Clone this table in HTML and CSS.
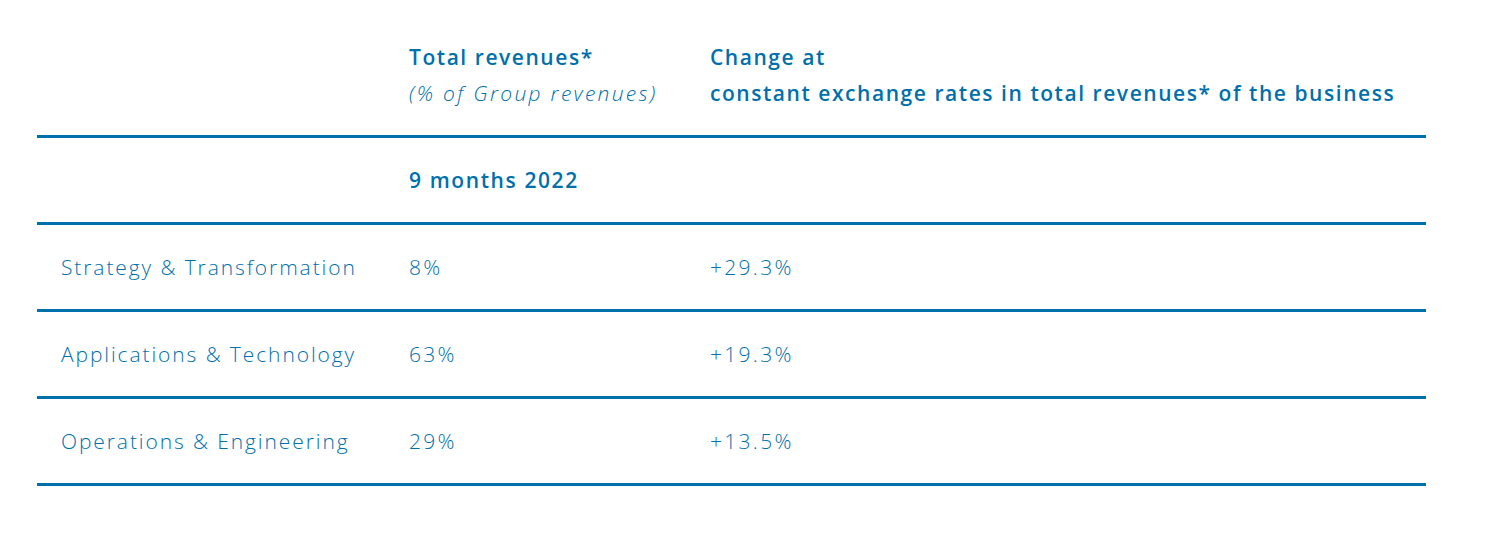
FILE: index.html
```html
<!DOCTYPE html>
<html lang="en">
<head>
<meta charset="utf-8">
<title>Revenues by business</title>
<link rel="stylesheet" href="styles.css">
</head>
<body>
<table class="rev">
  <colgroup>
    <col class="c1"><col class="c2"><col class="c3">
  </colgroup>
  <thead>
    <tr class="head">
      <th></th>
      <th><span class="b">Total revenues*</span><br><em>(% of Group revenues)</em></th>
      <th><span class="b">Change at<br>constant exchange rates in total revenues* of the business</span></th>
    </tr>
  </thead>
  <tbody>
    <tr class="period">
      <td></td>
      <td class="b">9 months 2022</td>
      <td></td>
    </tr>
    <tr>
      <td class="name">Strategy &amp; Transformation</td>
      <td class="num">8%</td>
      <td class="num">+29.3%</td>
    </tr>
    <tr>
      <td class="name">Applications &amp; Technology</td>
      <td class="num">63%</td>
      <td class="num">+19.3%</td>
    </tr>
    <tr>
      <td class="name">Operations &amp; Engineering</td>
      <td class="num">29%</td>
      <td class="num">+13.5%</td>
    </tr>
  </tbody>
</table>
</body>
</html>
```
FILE: styles.css
```css
html, body {
  margin: 0;
  padding: 0;
  background: #ffffff;
}
body {
  font-family: "Open Sans", "Noto Sans", sans-serif;
  color: #0070ad;
}
.rev {
  margin-left: 37px;
  width: 1389px;
  border-collapse: separate;
  border-spacing: 0;
  table-layout: fixed;
  font-size: 21px;
}
.c1 { width: 372px; }
.c2 { width: 301px; }
.rev th, .rev td {
  padding: 0;
  text-align: left;
  border-bottom: 3px solid #0070ad;
  vertical-align: middle;
  font-weight: 300;
  letter-spacing: 1.9px;
  white-space: nowrap;
}
.head th {
  padding-top: 39px;
  padding-bottom: 24px;
  line-height: 36px;
  height: 72px;
  vertical-align: bottom;
  box-sizing: content-box;
}
.rev td {
  height: 84px;
}
.rev .name {
  padding-left: 24px;
}
.rev td.num {
  letter-spacing: 2.3px;
}
.b {
  font-weight: 600;
  letter-spacing: 1.55px;
}
.rev td.b {
  font-weight: 600;
  letter-spacing: 1.6px;
}
em {
  font-style: italic;
  font-weight: 300;
  letter-spacing: 2.3px;
}
```
